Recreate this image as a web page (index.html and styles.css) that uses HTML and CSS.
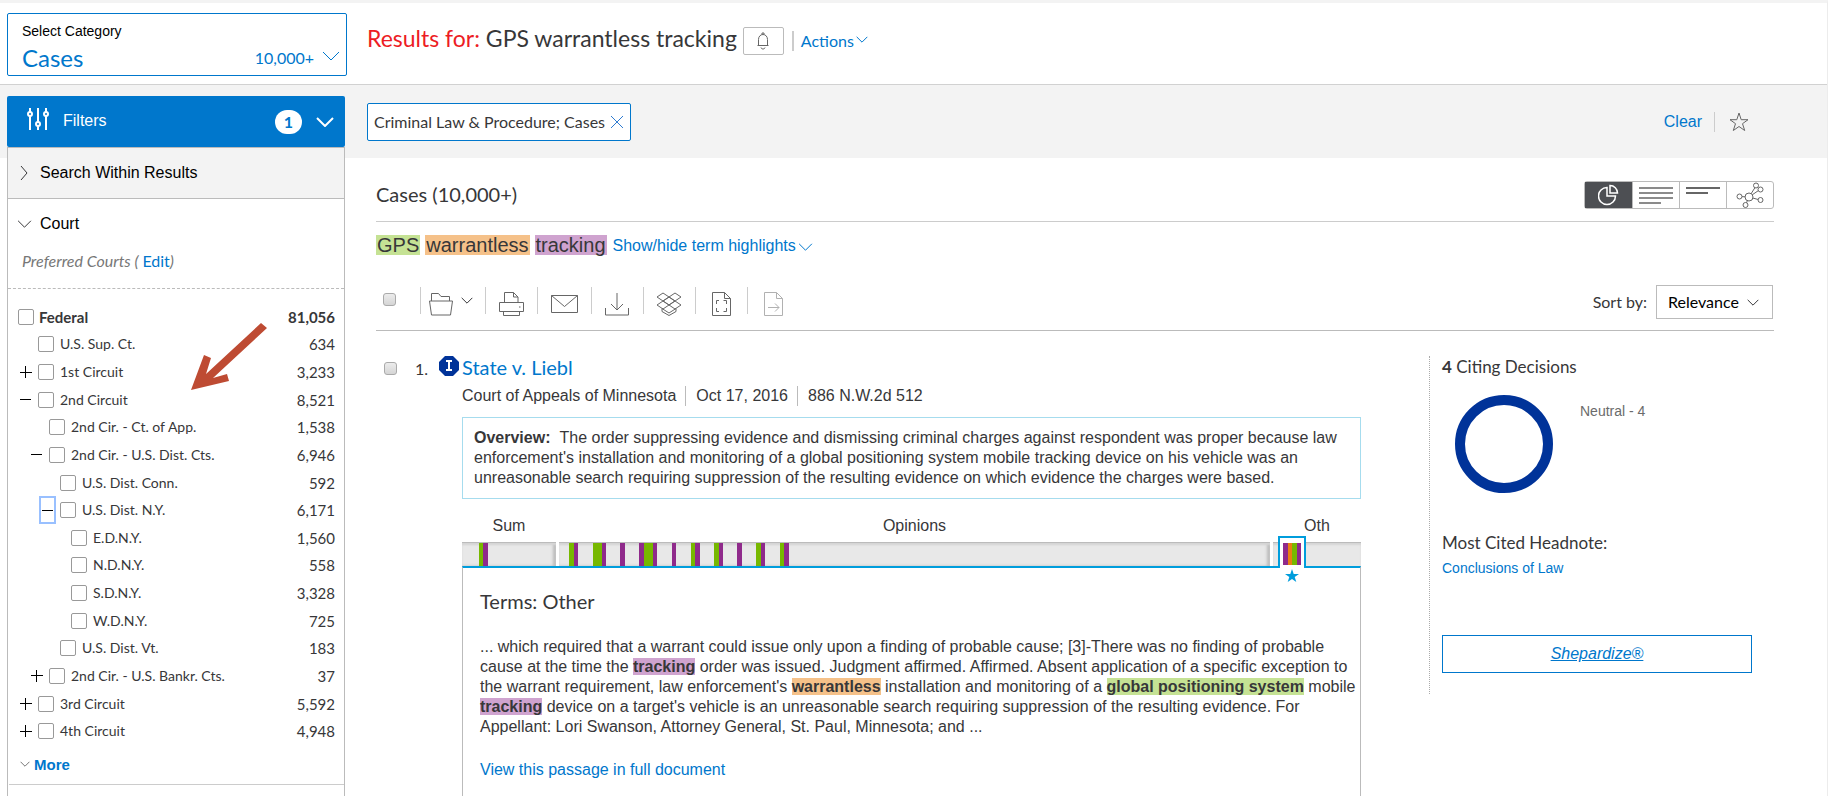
FILE: index.html
```html
<!DOCTYPE html>
<html lang="en">
	<head>
		<meta charset="utf-8">
		<title>Results for: GPS warrantless tracking</title>
		<link rel="stylesheet" href="styles.css">
	</head>
	<body>
		<svg class="sprite" aria-hidden="true">
			<symbol id="chevron" viewBox="0 0 18 10"><path d="M1 1l8 8 8-8" fill="none" stroke="currentColor" vector-effect="non-scaling-stroke"/></symbol>
		</svg>

		<header class="header">
			<button class="category" type="button">
				<span class="category_label">Select Category</span>
				<span class="category_row">
					<span class="category_name">Cases</span>
					<span class="category_count">10,000+</span>
					<svg class="chevron_large"><use href="#chevron"/></svg>
				</span>
			</button>
			<div class="heading">
				<h1><span class="red">Results for:</span> GPS warrantless tracking</h1>
				<button class="alert" type="button" aria-label="Create an alert">
					<svg width="14" height="18" viewBox="0 0 14 18" fill="none" stroke="#666"><path d="M1.500 13.500h11M2.500 13.500V7.500C2.500 4.500 4.500 2.500 7 2.500s4.500 2 4.500 5v6M6 2.500V1h2v1.500M5 15.500l1.200 1.500h1.600L9 15.500"/></svg>
				</button>
				<a class="actions" href="#">Actions<svg class="chevron_small"><use href="#chevron"/></svg></a>
			</div>
		</header>

		<div class="workspace">
			<div class="band"></div>

			<nav class="sidebar">
				<button class="filters" type="button">
					<svg class="sliders" width="22" height="24" viewBox="0 0 22 24" fill="none" stroke="#fff" stroke-width="2"><path d="M3 1v4M3 9v14M11 1v14M11 19v4M19 1v4M19 9v14"/><circle cx="3" cy="7" r="2"/><circle cx="11" cy="17" r="2"/><circle cx="19" cy="7" r="2"/></svg>
					<span class="filters_text">Filters</span>
					<span class="filters_count">1</span>
					<svg class="chevron_large thick"><use href="#chevron"/></svg>
				</button>
				<div class="panel">
					<button class="section grey" type="button">
						<svg class="chevron_right" viewBox="0 0 8 16"><path d="M1 1l6 7-6 7" fill="none" stroke="currentColor"/></svg>
						Search Within Results
					</button>
					<button class="section" type="button">
						<svg class="chevron_medium"><use href="#chevron"/></svg>
						Court
					</button>
					<p class="preferred">Preferred Courts ( <a href="#">Edit</a>)</p>

					<ul class="courts">
						<li class="top"><input type="checkbox" id="c1"><label for="c1">Federal</label><span>81,056</span></li>
						<li class="level1"><i></i><input type="checkbox" id="c2"><label for="c2">U.S. Sup. Ct.</label><span>634</span></li>
						<li class="level1"><button class="plus" type="button" aria-label="Expand"></button><input type="checkbox" id="c3"><label for="c3">1st Circuit</label><span>3,233</span></li>
						<li class="level1"><button class="minus" type="button" aria-label="Collapse"></button><input type="checkbox" id="c4"><label for="c4">2nd Circuit</label><span>8,521</span></li>
						<li class="level2"><i></i><input type="checkbox" id="c5"><label for="c5">2nd Cir. - Ct. of App.</label><span>1,538</span></li>
						<li class="level2"><button class="minus" type="button" aria-label="Collapse"></button><input type="checkbox" id="c6"><label for="c6">2nd Cir. - U.S. Dist. Cts.</label><span>6,946</span></li>
						<li class="level3"><i></i><input type="checkbox" id="c7"><label for="c7">U.S. Dist. Conn.</label><span>592</span></li>
						<li class="level3"><button class="minus active" type="button" aria-label="Collapse"></button><input type="checkbox" id="c8"><label for="c8">U.S. Dist. N.Y.</label><span>6,171</span></li>
						<li class="level4"><i></i><input type="checkbox" id="c9"><label for="c9">E.D.N.Y.</label><span>1,560</span></li>
						<li class="level4"><i></i><input type="checkbox" id="c10"><label for="c10">N.D.N.Y.</label><span>558</span></li>
						<li class="level4"><i></i><input type="checkbox" id="c11"><label for="c11">S.D.N.Y.</label><span>3,328</span></li>
						<li class="level4"><i></i><input type="checkbox" id="c12"><label for="c12">W.D.N.Y.</label><span>725</span></li>
						<li class="level3"><i></i><input type="checkbox" id="c13"><label for="c13">U.S. Dist. Vt.</label><span>183</span></li>
						<li class="level2"><button class="plus" type="button" aria-label="Expand"></button><input type="checkbox" id="c14"><label for="c14">2nd Cir. - U.S. Bankr. Cts.</label><span>37</span></li>
						<li class="level1"><button class="plus" type="button" aria-label="Expand"></button><input type="checkbox" id="c15"><label for="c15">3rd Circuit</label><span>5,592</span></li>
						<li class="level1"><button class="plus" type="button" aria-label="Expand"></button><input type="checkbox" id="c16"><label for="c16">4th Circuit</label><span>4,948</span></li>
					</ul>
					<svg class="arrow" width="80" height="72" viewBox="0 0 80 72"><path d="M2 70L15 35l7 3-5 16L72 3l6 5L24 58l14-4 2 7z" fill="#be4b33"/></svg>
					<a class="more" href="#"><svg class="chevron_tiny"><use href="#chevron"/></svg>More</a>
				</div>
			</nav>

			<div class="chips">
				<div class="chip">Criminal Law &amp; Procedure; Cases
					<button type="button" aria-label="Remove filter"><svg width="14" height="14" viewBox="0 0 14 14" fill="none" stroke="#2e7bd1"><path d="M1 1l12 12M13 1L1 13"/></svg></button>
				</div>
				<a class="clear" href="#">Clear</a>
				<button class="favorite" type="button" aria-label="Add to favorites">
					<svg width="20" height="20" viewBox="0 0 20 20" fill="none" stroke="#666"><path d="M10 1l2.200 6.700h6.800l-5.500 4 2.200 6.800L10 14.500l-5.700 4 2.200-6.800L1 7.700h6.800z"/></svg>
				</button>
			</div>

			<main class="main">
				<div class="title_row">
					<h2>Cases (10,000+)</h2>
					<div class="views">
						<button class="selected" type="button" aria-label="Graphical view"><svg width="22" height="22" viewBox="0 0 22 22" fill="none" stroke="#fff" stroke-width="1.500"><path d="M9 3.500A8.500 8.500 0 1 0 17.500 12H9z"/><path d="M12 1.500V9h7.500A7.500 7.500 0 0 0 12 1.500z"/></svg></button>
						<button type="button" aria-label="Full view"><svg width="34" height="18" viewBox="0 0 34 18" stroke="#666" stroke-width="1.500"><path d="M0 2h34M0 7h34M0 12h34M0 17h22"/></svg></button>
						<button type="button" aria-label="Title view"><svg width="34" height="18" viewBox="0 0 34 18" stroke="#666" stroke-width="2"><path d="M0 2h34M0 7h22"/></svg></button>
						<button type="button" aria-label="Map view"><svg width="28" height="26" viewBox="0 0 28 26" fill="#fff" stroke="#666"><path d="M13 15L3.500 14.500M13 15L9.500 23M13 15l7-11M13 15L24 7.500M13 15l11 3"/><circle cx="13" cy="15" r="4"/><circle cx="3.500" cy="14.500" r="2.500"/><circle cx="9.500" cy="23" r="2.500"/><circle cx="20" cy="3.500" r="2.500"/><circle cx="24.500" cy="7.500" r="2.500"/><circle cx="24.500" cy="18" r="2.500"/></svg></button>
					</div>
				</div>

				<div class="terms">
					<mark class="green">GPS</mark>
					<mark class="orange">warrantless</mark>
					<mark class="purple">tracking</mark>
					<a href="#">Show/hide term highlights<svg class="chevron_medium"><use href="#chevron"/></svg></a>
				</div>

				<div class="toolbar">
					<input class="pick" type="checkbox" aria-label="Select all results">
					<div class="tools">
						<button class="folder" type="button" aria-label="Add to folder"><svg width="24" height="24" viewBox="0 0 24 24"><path d="M2.500 9V1.500h7l2.500 3h8.500V9M.5 9h23l-2 14h-19z"/></svg><svg class="chevron_small"><use href="#chevron"/></svg></button>
						<button class="print" type="button" aria-label="Print"><svg width="26" height="24" viewBox="0 0 26 24"><path d="M5.500 10V.5h9l4.500 4.500v5M14.500.5V5H19M.5 10.500h24v9H.5zM4.500 19.500v4h16v-4M20 15h1.500"/></svg></button>
						<button class="mail" type="button" aria-label="Email"><svg width="28" height="24" viewBox="0 0 28 24"><path d="M.5 3.500h26v17H.5zM.5 3.500l13 11 13-11"/></svg></button>
						<button class="download" type="button" aria-label="Download"><svg width="24" height="24" viewBox="0 0 24 24"><path d="M12 1v17M6 12l6 6 6-6M.5 16v7h23v-7"/></svg></button>
						<button class="dropbox" type="button" aria-label="Dropbox"><svg width="24" height="24" viewBox="0 0 24 24"><path d="M6 1l6 4-6 4-6-4zM18 1l6 4-6 4-6-4zM6 9l6 4-6 4-6-4zM18 9l6 4-6 4-6-4zM12 5l6 4-6 4-6-4zM5 16.500v3l7 4 7-4v-3L12 21z"/></svg></button>
						<button class="clip" type="button" aria-label="Copy selection"><svg width="20" height="24" viewBox="0 0 20 24"><path d="M.5.5h12l6 6v17H.5zM12.500.5v6h6M7 8.500H4.500V12M11.500 8.500h3V12M7 19.500H4.500V16M11.500 19.500h3V16"/></svg></button>
						<button class="send" type="button" aria-label="Export"><svg class="faded" width="20" height="24" viewBox="0 0 20 24"><path d="M.5.5h12l6 6v17H.5zM12.500.5v6h6M4 15.500h11M11 11.500l4 4-4 4"/></svg></button>
					</div>
					<label class="sort_label" for="sort">Sort by:</label>
					<div class="sort">
						<select id="sort"><option>Relevance</option></select>
						<svg class="chevron_small"><use href="#chevron"/></svg>
					</div>
				</div>

				<article class="result">
					<input class="pick" type="checkbox" aria-label="Select State v. Liebl">
					<span class="number">1.</span>
					<svg class="signal" width="20" height="20" viewBox="0 0 20 20"><path d="M6 0h8l6 6v8l-6 6H6l-6-6V6z" fill="#039"/><path d="M7 5h6M10 5v9M7 14h6" fill="none" stroke="#fff" stroke-width="2"/></svg>

					<div class="case">
						<h3><a href="#">State v. Liebl</a></h3>
						<p class="meta"><span>Court of Appeals of Minnesota</span><span>Oct 17, 2016</span><span>886 N.W.2d 512</span></p>
						<p class="overview"><b>Overview:</b>The order suppressing evidence and dismissing criminal charges against respondent was proper because law enforcement's installation and monitoring of a global positioning system mobile tracking device on his vehicle was an unreasonable search requiring suppression of the resulting evidence on which evidence the charges were based.</p>

						<div class="map">
							<div class="part sum">
								<span>Sum</span>
								<svg viewBox="0 0 94 22" preserveAspectRatio="none"><path class="g" d="M17 0h4v22h-4z"/><path class="p" d="M21 0h5v22h-5z"/></svg>
							</div>
							<div class="part opinions">
								<span>Opinions</span>
								<svg viewBox="0 0 712 22" preserveAspectRatio="none">
									<path class="g" d="M10 0h5v22h-5zM34 0h9v22h-9zM85 0h9v22h-9zM132 0h4v22h-4zM155 0h5v22h-5zM197 0h5v22h-5zM221 0h4v22h-4z"/>
									<path class="p" d="M15 0h4v22h-4zM43 0h4v22h-4zM61 0h5v22h-5zM80 0h5v22h-5zM94 0h4v22h-4zM113 0h4v22h-4zM136 0h5v22h-5zM160 0h4v22h-4zM178 0h5v22h-5zM202 0h4v22h-4zM225 0h5v22h-5z"/>
								</svg>
							</div>
							<div class="part other">
								<span>Oth</span>
								<svg viewBox="0 0 88 22"></svg>
								<!-- marker for the passage that is shown below -->
								<div class="marker">
									<svg viewBox="0 0 18 22"><path class="p" d="M0 0h5v22H0zM14 0h4v22h-4z"/><path class="o" d="M5 0h4v22H5z"/><path class="g" d="M9 0h5v22H9z"/></svg>
									<svg class="star" width="14" height="14" viewBox="0 0 14 14"><path d="M7 0l1.700 5H14L9.700 8l1.600 5L7 10l-4.300 3 1.600-5L0 5h5.300z"/></svg>
								</div>
							</div>
						</div>

						<div class="passage">
							<h4>Terms: Other</h4>
							<p>... which required that a warrant could issue only upon a finding of probable cause; [3]-There was no finding of probable cause at the time the <mark class="purple">tracking</mark> order was issued. Judgment affirmed. Affirmed. Absent application of a specific exception to the warrant requirement, law enforcement's <mark class="orange">warrantless</mark> installation and monitoring of a <mark class="green">global positioning system</mark> mobile <mark class="purple">tracking</mark> device on a target's vehicle is an unreasonable search requiring suppression of the resulting evidence. For Appellant: Lori Swanson, Attorney General, St. Paul, Minnesota; and ...</p>
							<a href="#">View this passage in full document</a>
						</div>
					</div>

					<aside class="citing">
						<h4><b>4</b> Citing Decisions</h4>
						<div class="chart">
							<div class="ring"></div>
							<span>Neutral - 4</span>
						</div>
						<h4>Most Cited Headnote:</h4>
						<a class="headnote" href="#">Conclusions of Law</a>
						<a class="shepardize" href="#">Shepardize®</a>
					</aside>
				</article>
			</main>
		</div>
	</body>
</html>
```

FILE: styles.css
```css
* {
	box-sizing:border-box;
	margin:0;
	padding:0;
}

body {
	display:flex;
	flex-direction:column;
	min-height:100vh;

	background:white;
	border-top:3px solid #f3f3f3;
	border-right:1px solid #ececec;

	color:#373739;
	font-family:"Liberation Sans", Arial, sans-serif;
	font-size:16px;
	line-height:20px;
}

a {
	color:#0077cc;
	text-decoration:none;
}

button, select {
	background:none;
	border:0;

	color:inherit;
	font:inherit;
	text-align:left;
}

h1, h2, h3, h4 {
	font-family:Lato, sans-serif;
	font-weight:normal;
}

.sprite {
	position:absolute;
	width:0;
	height:0;
}

.red {
	color:#ed1c24;
}

mark {
	color:inherit;
}
	mark.green {
		background:#c5e294;
	}
	mark.orange {
		background:#f5c189;
	}
	mark.purple {
		background:#cfa3cf;
	}

/* chevrons */
.chevron_large {
	width:18px;
	height:10px;
}
.chevron_medium {
	width:15px;
	height:8px;
}
.chevron_small {
	width:12px;
	height:7px;
}
.chevron_tiny {
	width:10px;
	height:6px;
}
.chevron_right {
	width:8px;
	height:16px;
}
.thick {
	stroke-width:2px;
}

/* header */
.header {
	display:flex;
	gap:20px;

	padding:10px 7px 8px;
	height:82px;

	border-bottom:1px solid #d1d1d1;
}

.category {
	display:flex;
	flex-direction:column;
	justify-content:space-between;

	padding:7px 6px 3px 14px;
	width:340px;
	height:63px;

	border:1px solid #0077cc;
	border-radius:2px;

	color:#0077cc;
}
	.category_label {
		color:black;
		font-size:14px;
	}
	.category_row {
		display:flex;
		align-items:center;
		gap:8px;

		width:100%;

		font-family:Lato, sans-serif;
		line-height:28px;
	}
	.category_row svg {
		margin-bottom:4px;
	}
	.category_name {
		flex:1;
		font-size:24px;
	}

.heading {
	display:flex;
	align-items:center;
	height:56px;
}
	.heading h1 {
		padding-bottom:6px;
		font-size:23px;
		line-height:28px;
	}
	.alert {
		display:flex;
		align-items:center;
		justify-content:center;

		margin-left:6px;
		width:41px;
		height:28px;

		border:1px solid #bbb;
		border-radius:2px;
	}
	.actions {
		margin-left:8px;
		padding-left:7px;

		border-left:2px solid #ccc;

		font-family:Lato, sans-serif;
	}
	.actions svg {
		margin-left:2px;
		vertical-align:4px;
	}

/* grid below the header: the filters run over the grey band */
.workspace {
	display:grid;
	grid-template-columns:345px minmax(0, 1fr);
	grid-template-rows:73px 1fr;
	flex:1;
}

.band {
	grid-area:1 / 1 / 2 / 3;
	background:#f3f3f3;
}

.sidebar {
	display:flex;
	flex-direction:column;
	grid-area:1 / 1 / 3 / 2;
	padding:11px 0 0 7px;
}

.filters {
	display:flex;
	align-items:center;

	padding:0 11px 0 20px;
	height:51px;

	background:#0077cc;
	border-radius:2px;

	color:white;
}
	.sliders {
		margin-bottom:6px;
	}
	.filters_text {
		flex:1;
		padding:0 0 2px 14px;
	}
	.filters_count {
		margin-right:14px;
		width:27px;

		background:white;
		border-radius:12px;

		color:#0077cc;
		font-family:Lato, sans-serif;
		font-weight:bold;
		line-height:24px;
		text-align:center;
	}

.panel {
	position:relative;
	flex:1;

	background:white;
	border:1px solid #bbb;
	border-bottom:0;
}

.section {
	display:flex;
	align-items:center;
	gap:8px;

	padding-left:9px;
	width:100%;
	height:50px;

	color:black;
}
	.section svg {
		color:#373739;
	}
	.section.grey {
		gap:12px;
		padding-left:12px;
		height:51px;

		background:#f3f3f3;
		border-bottom:1px solid #bbb;
	}

.preferred {
	padding:2px 14px 17px;

	border-bottom:1px dashed #bbb;

	color:#777;
	font-family:Lato, sans-serif;
	font-style:italic;
}
	.preferred a {
		font-style:normal;
	}

.courts {
	display:grid;
	grid-auto-rows:1fr;

	margin-top:14px;
	height:442px;

	font-family:Lato, sans-serif;
	font-size:15px;
	list-style:none;
}
	.courts li {
		display:flex;
		align-items:center;
		padding-right:9px;
	}
	.courts .top {
		padding-left:10px;
		font-weight:bold;
	}
	.courts .level1 {
		padding-left:9px;
	}
	.courts .level2 {
		padding-left:20px;
	}
	.courts .level3 {
		padding-left:31px;
	}
	.courts .level4 {
		padding-left:42px;
	}
	.courts input {
		appearance:none;

		width:16px;
		height:16px;

		border:1px solid #999;
		border-radius:2px;
	}
	.courts label {
		flex:1;
		padding-left:6px;
		font-size:14px;
	}
	.courts .top label {
		padding-left:5px;
		font-size:15px;
	}
	.courts i, .courts button {
		margin-right:4px;
		width:17px;
		height:24px;
	}
	.plus {
		background:linear-gradient(black, black) center / 12px 1px no-repeat, linear-gradient(black, black) center / 1px 12px no-repeat;
	}
	.minus {
		background:linear-gradient(black, black) center / 11px 1px no-repeat;
	}
	.minus.active {
		box-shadow:inset 2px 0 #99c0ff, inset -2px 0 #99c0ff, 0 2px #99c0ff, 0 -2px #99c0ff;
	}

.arrow {
	position:absolute;
	left:181px;
	top:172px;
}

.more {
	display:block;

	margin-left:1px;
	padding:10px 0 9px 11px;

	border-bottom:1px solid #ccc;

	font-size:15px;
	font-weight:bold;
}
	.more svg {
		margin-right:4px;
		color:#777;
		vertical-align:3px;
	}

/* chips */
.chips {
	display:flex;
	align-items:center;
	grid-area:1 / 2 / 2 / 3;

	padding:0 78px 0 22px;
}

.chip {
	display:flex;
	align-items:center;
	gap:5px;

	margin-right:auto;
	padding:0 6px;
	height:38px;

	background:white;
	border:1px solid #0077cc;
	border-radius:2px;

	font-family:Lato, sans-serif;
}
	.chip button, .favorite {
		display:flex;
	}

.clear {
	padding-right:12px;
}
.favorite {
	padding-left:14px;
	border-left:1px solid #ccc;
}

/* main */
.main {
	display:flex;
	flex-direction:column;
	grid-area:2 / 2 / 3 / 3;

	padding:0 53px 0 31px;
}

.title_row {
	display:flex;
	align-items:center;
	justify-content:space-between;

	height:64px;
	padding-top:10px;

	border-bottom:1px solid #ccc;
}
	.title_row h2 {
		padding-bottom:2px;
		font-size:20px;
	}

.views {
	display:flex;
	height:28px;

	border:1px solid #bbb;
	border-radius:3px;
}
	.views button {
		display:flex;
		align-items:center;
		justify-content:center;
		width:47px;
	}
	.views button + button {
		border-left:1px solid #bbb;
	}
	.views .selected {
		background:#4d4f53;
	}

.terms {
	display:flex;
	align-items:center;
	gap:5px;
	padding-top:12px;
}
	.terms mark {
		padding:0 1px;
		font-size:20px;
	}
	.terms a {
		padding:2px 0 0 1px;
	}
	.terms svg {
		margin-left:2px;
	}

.pick {
	appearance:none;

	width:13px;
	height:13px;

	background:linear-gradient(#ececec, #d5d5d5);
	border:1px solid #aaa;
	border-radius:3px;
}

.toolbar {
	display:flex;
	align-items:center;

	margin-top:18px;
	padding-right:1px;
	height:57px;

	border-bottom:1px solid #bbb;
}
	.toolbar .pick {
		margin:0 24px 6px 7px;
	}

.tools {
	display:flex;
	flex:1;
	height:30px;
}
	.tools button {
		display:flex;
		align-items:center;

		padding-left:13px;
		width:52px;
		height:27px;

		border-left:1px solid #ccc;
	}
	.tools button > svg:first-child {
		position:relative;
		top:3px;

		fill:none;
		stroke:#666;
	}
	.tools .folder {
		gap:8px;
		padding-left:8px;
		width:65px;
	}
	.tools .mail {
		width:54px;
	}
	.tools .send, .tools .clip {
		padding-left:16px;
	}
	.tools .faded {
		opacity:.5;
	}

.sort_label {
	margin-right:9px;
	font-family:Lato, sans-serif;
}
.sort {
	display:flex;
	align-items:center;

	padding-right:13px;
	height:34px;
	width:117px;

	border:1px solid #bbb;
}
	.sort select {
		appearance:none;

		flex:1;
		padding-left:11px;
		height:32px;

		color:black;
		font-family:Lato, sans-serif;
	}

/* result */
.result {
	display:flex;
	flex:1;
	align-items:flex-start;
	padding-top:25px;
}
	.result .pick {
		margin:6px 18px 0 8px;
	}
	.number {
		width:24px;
		padding-top:3px;
		font-family:Lato, sans-serif;
	}
	.signal {
		margin-right:3px;
	}

.case {
	display:flex;
	flex:1;
	flex-direction:column;
	align-self:stretch;
}
	.case h3 {
		font-size:20px;
		line-height:22px;
	}

.meta {
	display:flex;
	padding:8px 0 11px;
}
	.meta span + span {
		margin-left:9px;
		padding-left:10px;
		border-left:1px solid #bbb;
	}

.overview {
	padding:10px 11px;
	border:1px solid #a6dcee;
}
	.overview b {
		margin-right:9px;
	}

.map {
	display:flex;
	gap:3px;
	margin-top:17px;
}
	.part {
		position:relative;
	}
	.sum {
		width:94px;
	}
	.opinions {
		flex:1;
	}
	.other {
		width:88px;
	}
	.part span {
		display:block;
		padding-bottom:6px;
		text-align:center;
	}
	.part > svg {
		display:block;

		width:100%;
		height:24px;

		background:#e8e8e8;
		border-top:1px solid #bbb;
		box-shadow:inset 0 2px 2px #d5d5d5, inset -3px 0 3px #bbb;
		shape-rendering:crispEdges;
	}
	.other > svg {
		box-shadow:inset 0 2px 2px #d5d5d5;
	}
	.g {
		fill:#77b800;
	}
	.p {
		fill:#8f2a8b;
	}
	.o {
		fill:#ea7f12;
	}

.marker {
	position:absolute;
	left:5px;
	bottom:-2px;

	padding:5px 3px;
	width:28px;
	height:32px;

	background:white;
	border:2px solid #009ddc;
	border-bottom:0;
}
	.marker svg {
		display:block;

		width:18px;
		height:22px;

		shape-rendering:crispEdges;
	}
	.marker .star {
		position:absolute;
		left:5px;
		top:31px;

		width:14px;
		height:14px;

		fill:#009ddc;
		shape-rendering:auto;
	}

.passage {
	flex:1;

	padding:23px 2px 0 17px;

	border:1px solid #bbb;
	border-top:2px solid #009ddc;
	border-bottom:0;
}
	.passage h4 {
		font-size:20px;
	}
	.passage p {
		padding:26px 0 23px;
	}
	.passage mark {
		font-weight:bold;
	}

/* citing decisions */
.citing {
	margin-left:68px;
	padding:1px 0 0 12px;
	width:345px;
	height:338px;

	border-left:1px dotted #aaa;
}
	.citing h4 {
		font-size:17px;
	}

.chart {
	display:flex;
	align-items:flex-start;
	gap:27px;

	padding:18px 0 40px 13px;

	color:#6b6b6b;
	font-size:14px;
}
	.chart span {
		padding-top:6px;
	}

.ring {
	width:98px;
	height:98px;

	border:10px solid #039;
	border-radius:50%;
}

.headnote {
	display:block;
	padding-top:4px;
	margin-bottom:56px;
	font-size:14px;
	line-height:22px;
}

.shepardize {
	display:block;

	width:310px;

	border:1px solid #0077cc;

	font-style:italic;
	line-height:36px;
	text-align:center;
	text-decoration:underline;
}
```
